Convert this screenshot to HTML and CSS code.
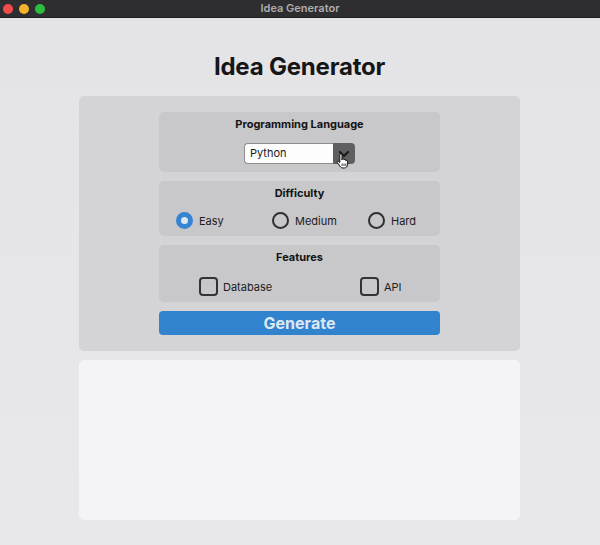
FILE: index.html
```html
<!DOCTYPE html>
<html>
<head>
<meta charset="utf-8">
<link rel="stylesheet" href="styles.css">
</head>
<body>
<div class="window">
  <div class="titlebar">
    <div class="lights">
      <span class="light red"></span>
      <span class="light yellow"></span>
      <span class="light green"></span>
    </div>
    <div class="wtitle">Idea Generator</div>
  </div>
  <div class="content">
    <h1 class="heading">Idea Generator</h1>
    <div class="panel">
      <div class="section s1">
        <div class="label">Programming Language</div>
        <div class="select-row">
          <div class="select">
            <div class="select-value">Python</div>
            <div class="select-btn">
              <svg width="14" height="14" viewBox="0 0 14 14"><path d="M3 5 L7 9 L11 5" fill="none" stroke="#1b1b1c" stroke-width="2.2" stroke-linecap="round" stroke-linejoin="round"/></svg>
            </div>
            <svg class="cursor" width="14" height="16" viewBox="0 0 14 16"><path d="M4.2 1.2 C4.9 0.6 6 1 6 2 L6 7 L6.2 5.8 C6.6 5 7.8 5.2 7.9 6.1 L8 7 C8.3 6.2 9.5 6.3 9.7 7.1 L9.8 7.8 C10.2 7.1 11.4 7.3 11.5 8.2 L11.6 11.3 C11.6 13.6 10.2 15 8.2 15 L6.9 15 C5.6 15 4.7 14.3 4 13.3 L1.3 9.5 C0.8 8.8 1.7 7.9 2.5 8.4 L3.8 9.5 L3.8 2 C3.8 1.7 4 1.4 4.2 1.2 Z" fill="#ffffff" stroke="#111" stroke-width="1"/><path d="M6.1 10.5 L6.1 13 M8 10.5 L8 13 M9.8 10.5 L9.8 13" stroke="#111" stroke-width="0.8"/></svg>
          </div>
        </div>
      </div>
      <div class="section s2">
        <div class="label">Difficulty</div>
        <div class="radios">
          <div class="radio-item"><span class="radio checked"></span><span class="opt">Easy</span></div>
          <div class="radio-item"><span class="radio"></span><span class="opt">Medium</span></div>
          <div class="radio-item"><span class="radio"></span><span class="opt">Hard</span></div>
        </div>
      </div>
      <div class="section s3">
        <div class="label">Features</div>
        <div class="checks">
          <div class="check-item"><span class="box"></span><span class="opt">Database</span></div>
          <div class="check-item"><span class="box"></span><span class="opt">API</span></div>
        </div>
      </div>
      <button class="generate">Generate</button>
    </div>
    <div class="output"></div>
  </div>
</div>
</body>
</html>
```

FILE: styles.css
```css
* { box-sizing: border-box; }
html, body { margin: 0; padding: 0; }
body {
  width: 600px;
  height: 545px;
  overflow: hidden;
  font-family: Inter, "Liberation Sans", sans-serif;
  background: #e5e4e7;
}
.window { width: 600px; height: 545px; display: flex; flex-direction: column; }
.titlebar {
  height: 18px;
  background: #2e2d30;
  display: flex;
  align-items: center;
  position: relative;
  border-bottom: 1px solid #1e1e20;
}
.lights { display: flex; gap: 6px; padding-left: 3px; }
.light { width: 10px; height: 10px; border-radius: 50%; display: block; }
.red { background: #f04d4c; }
.yellow { background: #f5b12a; }
.green { background: #2bbd3c; }
.wtitle {
  position: absolute;
  left: 0; right: 0; top: 0;
  line-height: 17px;
  text-align: center;
  color: #aeadb1;
  font-size: 11px;
  font-weight: 600;
}
.content {
  flex: 1;
  background: linear-gradient(#e4e3e6, #e8e7ea);
  display: flex;
  flex-direction: column;
  align-items: center;
  padding-right: 1px;
}
.heading {
  margin: 32px 0 0;
  height: 46px;
  font-size: 24px;
  font-weight: 700;
  color: #161616;
  letter-spacing: -0.2px;
  line-height: 34px;
  text-align: center;
}
.panel {
  width: 441px;
  background: #d4d3d6;
  border-radius: 5px;
  padding: 16px 80px;
  display: flex;
  flex-direction: column;
  gap: 9px;
}
.section {
  background: #c8c7ca;
  border-radius: 5px;
  display: flex;
  flex-direction: column;
  align-items: stretch;
}
.label {
  text-align: center;
  font-size: 11px;
  font-weight: 700;
  color: #141414;
  line-height: 14px;
}
.s1 { height: 60px; padding-top: 5px; }
.select-row { display: flex; justify-content: center; margin-top: 12px; }
.select {
  position: relative;
  display: flex;
  width: 111px;
  height: 21px;
}
.select-value {
  flex: 1;
  background: #fdfdfd;
  border: 1px solid #8d8c8f;
  border-right: none;
  border-radius: 4px 0 0 4px;
  font-size: 11px;
  color: #1a1a1a;
  line-height: 19px;
  padding-left: 5px;
}
.select-btn {
  width: 22px;
  background: #5f5f61;
  border-radius: 0 4px 4px 0;
  display: flex;
  align-items: center;
  justify-content: center;
}
.cursor { position: absolute; left: 92px; top: 10px; }
.s2 { height: 55px; padding-top: 5px; }
.radios {
  display: grid;
  grid-template-columns: 96px 96px 80px;
  padding-left: 17px;
  margin-top: 12px;
}
.radio-item { display: flex; align-items: center; gap: 6px; }
.radio {
  width: 17px; height: 17px;
  border-radius: 50%;
  border: 2.5px solid #303032;
  display: block;
}
.radio.checked {
  border: 5px solid #3585d5;
  background: #dfe6ef;
}
.opt { font-size: 11px; color: #1c1c1c; }
.s3 { height: 57px; padding-top: 5px; }
.checks {
  display: grid;
  grid-template-columns: 161px auto;
  margin-top: 13px;
  padding-left: 40px;
}
.check-item { display: flex; align-items: center; gap: 5px; }
.box {
  width: 19px; height: 19px;
  border-radius: 4px;
  border: 2.5px solid #333335;
  display: block;
}
.generate {
  height: 24px;
  border: none;
  border-radius: 4px;
  background: #3283cd;
  color: #dde8f4;
  font-family: Inter, "Liberation Sans", sans-serif;
  font-weight: 700;
  font-size: 16px;
  padding: 0;
  line-height: 24px;
}
.output {
  margin-top: 9px;
  width: 441px;
  height: 160px;
  background: #f4f3f7;
  border-radius: 5px;
}
```
